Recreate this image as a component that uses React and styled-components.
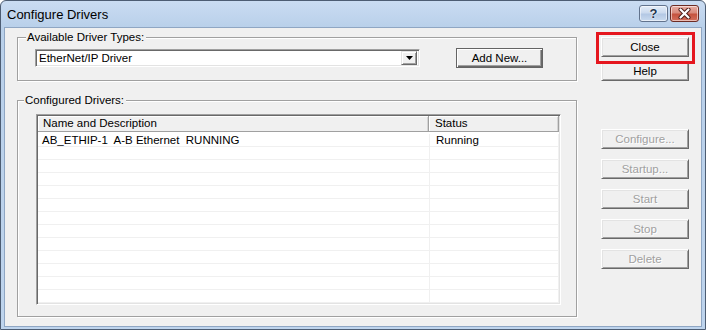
import styled, { createGlobalStyle } from "styled-components";

const GlobalStyle = createGlobalStyle`
  html, body { margin: 0; padding: 0; background: #ffffff; }
  body { font-family: "Liberation Sans", Arial, sans-serif; }
`;

const Window = styled.div`
  width: 706px;
  height: 330px;
  box-sizing: border-box;
  border: 1px solid #4d5d73;
  border-radius: 6px 6px 0 0;
  background: linear-gradient(#cadcf2, #b9d0ea 26px, #bed4ed);
  display: flex;
  flex-direction: column;
  padding: 0 3px 2px 3px;
  overflow: hidden;
`;

const TitleBar = styled.div`
  height: 26px;
  display: flex;
  justify-content: space-between;
  align-items: flex-start;
  padding: 4px 3px 0 3px;
  box-sizing: border-box;
`;

const Title = styled.div`
  font-size: 13px;
  color: #000;
  align-self: center;
  margin-top: -4px;
`;

const Captions = styled.div`
  display: flex;
  gap: 2px;
`;

const CaptionButton = styled.div`
  width: 29px;
  height: 17px;
  box-sizing: border-box;
  border-radius: 3px;
  display: flex;
  align-items: center;
  justify-content: center;
  border: 1px solid ${(p) => (p.$close ? "#6d2c24" : "#62738d")};
  background: ${(p) =>
    p.$close
      ? "linear-gradient(#e8ada3, #d88a7c 45%, #c5533f 55%, #d36f5c)"
      : "linear-gradient(#e4edf8, #cbdaee 45%, #b3c8e4 55%, #c9daef)"};
  box-shadow: inset 0 0 0 1px rgba(255, 255, 255, 0.55);
  font-size: 13px;
  font-weight: bold;
  color: #24344f;
  text-shadow: 0 0 2px #fff, 0 0 1px #fff;
`;

const Body = styled.div`
  flex: 1;
  background: #f0f0f0;
  border: 1px solid #8fa6c3;
  display: flex;
  font-size: 11.5px;
  color: #000;
`;

const LeftColumn = styled.div`
  width: 560px;
  margin: 9px 0 0 12px;
  display: flex;
  flex-direction: column;
  gap: 19px;
`;

const GroupBox = styled.div`
  position: relative;
  box-sizing: border-box;
  height: ${(p) => p.$height}px;
  border: 1px solid #a0a0a0;
  box-shadow: inset 1px 1px #ffffff, 1px 1px #ffffff;
  padding: ${(p) => p.$padding};
  display: flex;
  align-items: ${(p) => (p.$row ? "center" : "stretch")};
  gap: 36px;
`;

const Legend = styled.span`
  position: absolute;
  top: -8px;
  left: ${(p) => p.$left}px;
  padding: 0 2px 0 1px;
  line-height: 14px;
  background: #f0f0f0;
`;

const Combo = styled.div`
  width: 385px;
  height: 18px;
  box-sizing: border-box;
  background: #ffffff;
  border-top: 1px solid #a0a0a0;
  border-left: 1px solid #a0a0a0;
  border-right: 1px solid #ffffff;
  border-bottom: 1px solid #ffffff;
  box-shadow: inset 1px 1px #696969, inset -1px -1px #e3e3e3;
  display: flex;
  align-items: center;
  justify-content: space-between;
  padding: 0 2px 0 3px;
`;

const ComboArrow = styled.div`
  width: 16px;
  height: 14px;
  box-sizing: border-box;
  background: #f0f0f0;
  border-top: 1px solid #e3e3e3;
  border-left: 1px solid #e3e3e3;
  border-right: 1px solid #696969;
  border-bottom: 1px solid #696969;
  box-shadow: inset 1px 1px #ffffff, inset -1px -1px #a0a0a0;
  display: flex;
  align-items: center;
  justify-content: center;
`;

const Button = styled.button`
  width: ${(p) => p.$width || 88}px;
  height: 20px;
  box-sizing: border-box;
  margin: 0;
  padding: 0;
  font-family: "Liberation Sans", Arial, sans-serif;
  font-size: 11.5px;
  color: #000;
  background: #f0f0f0;
  border-top: 1px solid ${(p) => (p.$default ? "#646464" : "#ffffff")};
  border-left: 1px solid ${(p) => (p.$default ? "#646464" : "#ffffff")};
  border-right: 1px solid ${(p) => (p.$default ? "#646464" : "#696969")};
  border-bottom: 1px solid ${(p) => (p.$default ? "#646464" : "#696969")};
  box-shadow: ${(p) =>
    p.$default
      ? "inset 1px 1px #ffffff, inset -1px -1px #696969, inset -2px -2px #a0a0a0"
      : "inset 1px 1px #e3e3e3, inset -1px -1px #a0a0a0"};
  cursor: default;

  &:disabled {
    color: #a0a0a0;
    text-shadow: 1px 1px #ffffff;
  }
`;

const ListView = styled.div`
  width: 525px;
  height: 191px;
  box-sizing: border-box;
  background: #ffffff;
  border-top: 1px solid #a0a0a0;
  border-left: 1px solid #a0a0a0;
  border-right: 1px solid #ffffff;
  border-bottom: 1px solid #ffffff;
  box-shadow: inset 1px 1px #696969, inset -1px -1px #e3e3e3;
  padding: 1px;
  display: flex;
  flex-direction: column;
  overflow: hidden;
`;

const Header = styled.div`
  display: flex;
  height: 16px;
  flex-shrink: 0;
`;

const HeaderCell = styled.div`
  box-sizing: border-box;
  width: ${(p) => (p.$width ? `${p.$width}px` : "auto")};
  flex: ${(p) => (p.$width ? "none" : 1)};
  background: #f0f0f0;
  border-right: 1px solid #a0a0a0;
  border-bottom: 1px solid #a0a0a0;
  box-shadow: inset 1px 1px #ffffff, inset -1px 0 #d5d5d5;
  padding-left: ${(p) => p.$pad}px;
  line-height: 15px;
  white-space: pre;
`;

const Rows = styled.div`
  flex: 1;
  padding-top: 2px;
  overflow: hidden;
`;

const Row = styled.div`
  display: flex;
  height: 13px;
  box-sizing: border-box;
  border-bottom: 1px solid #f0f0f0;
`;

const Cell = styled.div`
  box-sizing: border-box;
  width: ${(p) => (p.$width ? `${p.$width}px` : "auto")};
  flex: ${(p) => (p.$width ? "none" : 1)};
  border-right: 1px solid #f0f0f0;
  padding-left: ${(p) => p.$pad}px;
  line-height: 12px;
  white-space: pre;
`;

const RightColumn = styled.div`
  margin: 9px 0 0 24px;
  display: flex;
  flex-direction: column;
  width: 88px;
`;

const TopButtons = styled.div`
  display: flex;
  flex-direction: column;
  gap: 4px;
`;

const ActionButtons = styled.div`
  display: flex;
  flex-direction: column;
  gap: 10px;
  margin-top: 48px;
`;

const Highlighted = styled.div`
  position: relative;
`;

const RedFrame = styled.span`
  position: absolute;
  top: -5px;
  left: -5px;
  right: -6px;
  bottom: -7px;
  border: 3px solid #e5161e;
  pointer-events: none;
  z-index: 2;
`;

function CloseGlyph() {
  return (
    <svg width="13" height="11" viewBox="0 0 13 11">
      <path d="M2.5 1.5 L10.5 9.5 M10.5 1.5 L2.5 9.5" stroke="#4a1a14" strokeWidth="4" strokeLinecap="round" />
      <path d="M2.5 1.5 L10.5 9.5 M10.5 1.5 L2.5 9.5" stroke="#ffffff" strokeWidth="2.2" strokeLinecap="round" />
    </svg>
  );
}

function DownArrow() {
  return (
    <svg width="7" height="4" viewBox="0 0 7 4">
      <path d="M0 0 H7 L3.5 4 Z" fill="#000" />
    </svg>
  );
}

const rows = [
  { name: "AB_ETHIP-1  A-B Ethernet  RUNNING", status: "Running" },
  ...Array.from({ length: 13 }, () => ({ name: "", status: "" })),
];

export default function App() {
  return (
    <>
      <GlobalStyle />
      <Window>
        <TitleBar>
          <Title>Configure Drivers</Title>
          <Captions>
            <CaptionButton>?</CaptionButton>
            <CaptionButton $close>
              <CloseGlyph />
            </CaptionButton>
          </Captions>
        </TitleBar>
        <Body>
          <LeftColumn>
            <GroupBox $height={44} $padding="10px 0 12px 17px" $row>
              <Legend $left={8}>Available Driver Types:</Legend>
              <Combo>
                <span>EtherNet/IP Driver</span>
                <ComboArrow>
                  <DownArrow />
                </ComboArrow>
              </Combo>
              <Button $default $width={87}>Add New...</Button>
            </GroupBox>
            <GroupBox $height={217} $padding="13px 0 0 18px">
              <Legend $left={6}>Configured Drivers:</Legend>
              <ListView>
                <Header>
                  <HeaderCell $width={391} $pad={5}>Name and Description</HeaderCell>
                  <HeaderCell $pad={6}>Status</HeaderCell>
                </Header>
                <Rows>
                  {rows.map((r, i) => (
                    <Row key={i}>
                      <Cell $width={392} $pad={4}>{r.name}</Cell>
                      <Cell $pad={6}>{r.status}</Cell>
                    </Row>
                  ))}
                </Rows>
              </ListView>
            </GroupBox>
          </LeftColumn>
          <RightColumn>
            <TopButtons>
              <Highlighted>
                <Button>Close</Button>
                <RedFrame />
              </Highlighted>
              <Button>Help</Button>
            </TopButtons>
            <ActionButtons>
              <Button disabled>Configure...</Button>
              <Button disabled>Startup...</Button>
              <Button disabled>Start</Button>
              <Button disabled>Stop</Button>
              <Button disabled>Delete</Button>
            </ActionButtons>
          </RightColumn>
        </Body>
      </Window>
    </>
  );
}
